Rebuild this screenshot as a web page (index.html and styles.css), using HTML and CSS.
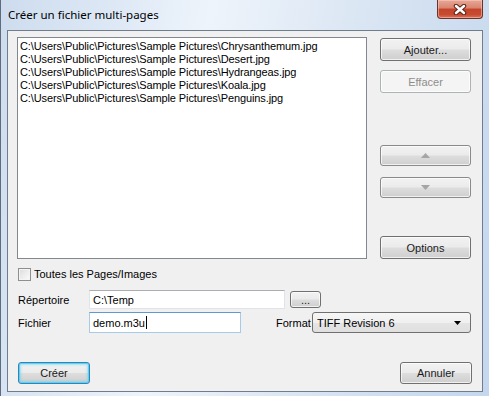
FILE: index.html
```html
<!DOCTYPE html>
<html lang="fr">
<head>
    <meta charset="UTF-8">
    <meta name="viewport" content="width=device-width, initial-scale=1.0">
    <title>Créer un fichier multi-pages</title>
    <link rel="stylesheet" href="styles.css">
</head>
<body>
    <div class="window">
        <div class="titlebar">
            <span class="title">Créer un fichier multi-pages</span>
            <div class="close">
                <svg width="14" height="11" viewBox="0 0 14 11">
                    <path d="M3 2 L11 9 M11 2 L3 9" stroke="#5b2216" stroke-width="4.5" stroke-linecap="round"/>
                    <path d="M3 2 L11 9 M11 2 L3 9" stroke="#fff" stroke-width="2.5" stroke-linecap="round"/>
                </svg>
            </div>
        </div>

        <div class="client">
            <div class="top">
                <ul class="filelist">
                    <li>C:\Users\Public\Pictures\Sample Pictures\Chrysanthemum.jpg</li>
                    <li>C:\Users\Public\Pictures\Sample Pictures\Desert.jpg</li>
                    <li>C:\Users\Public\Pictures\Sample Pictures\Hydrangeas.jpg</li>
                    <li>C:\Users\Public\Pictures\Sample Pictures\Koala.jpg</li>
                    <li>C:\Users\Public\Pictures\Sample Pictures\Penguins.jpg</li>
                </ul>
                <div class="side">
                    <button class="btn add">Ajouter...</button>
                    <button class="btn erase" disabled>Effacer</button>
                    <button class="btn move up">
                        <svg width="9" height="5" viewBox="0 0 9 5"><path d="M0 5 L4.5 0 L9 5 Z" fill="#a5a5a5"/></svg>
                    </button>
                    <button class="btn move down">
                        <svg width="9" height="5" viewBox="0 0 9 5"><path d="M0 0 L9 0 L4.5 5 Z" fill="#a5a5a5"/></svg>
                    </button>
                    <button class="btn options">Options</button>
                </div>
            </div>

            <label class="check"><span class="box"></span>Toutes les Pages/Images</label>

            <div class="row dir">
                <span class="label">Répertoire</span>
                <div class="field wide">C:\Temp</div>
                <button class="btn browse">...</button>
            </div>

            <div class="row file">
                <span class="label">Fichier</span>
                <div class="field narrow focus">demo.m3u<span class="caret"></span></div>
                <span class="format-label">Format</span>
                <div class="combo">
                    <span>TIFF Revision 6</span>
                    <svg width="7" height="4" viewBox="0 0 7 4"><path d="M0 0 L7 0 L3.5 4 Z" fill="#000"/></svg>
                </div>
            </div>

            <div class="actions">
                <button class="btn default">Créer</button>
                <button class="btn">Annuler</button>
            </div>
        </div>
    </div>
</body>
</html>
```

FILE: styles.css
```css
body {
    margin: 0;
    padding: 0;
    font-family: 'Liberation Sans', Arial, sans-serif;
    font-size: 11px;
    color: #000;
}

.window {
    width: 489px;
    height: 396px;
    box-sizing: border-box;
    padding: 0 6px 4px 6px;
    border-left: 1px solid #5f6c7b;
    background: linear-gradient(100deg, #cddcee 0%, #dde8f5 20%, #eef4fb 38%, #e2ebf6 55%, #d3e1f1 75%, #c4d7ee 100%);
    display: flex;
    flex-direction: column;
}

.titlebar {
    height: 30px;
    display: flex;
    justify-content: space-between;
    align-items: flex-start;
}

.title {
    font-family: 'Noto Sans', sans-serif;
    font-size: 11.5px;
    padding: 7px 0 0 1px;
    color: #000;
}

.close {
    width: 46px;
    height: 19px;
    box-sizing: border-box;
    border: 1px solid #6b3328;
    border-top: none;
    border-radius: 0 0 4px 4px;
    background: linear-gradient(#e6a898 0%, #d9846f 45%, #c5442b 50%, #c74a2f 80%, #d8735b 100%);
    box-shadow: inset 0 0 0 1px rgba(255, 210, 200, 0.5);
    display: flex;
    align-items: center;
    justify-content: center;
}

.client {
    flex: 1;
    border: 1px solid #6f7d8c;
    background-color: #f0f0f0;
    padding: 6px 11px 0 9px;
    display: flex;
    flex-direction: column;
}

.top {
    display: flex;
    height: 222px;
}

.filelist {
    flex: 1;
    margin: 0;
    padding: 2px 2px;
    list-style: none;
    background: #fff;
    border: 1px solid #828790;
    line-height: 13px;
    letter-spacing: -0.1px;
}

.side {
    width: 91px;
    margin-left: 13px;
    display: flex;
    flex-direction: column;
}

.btn {
    font-family: 'Liberation Sans', Arial, sans-serif;
    font-size: 11px;
    font-weight: 400;
    color: #1a1a1a;
    height: 23px;
    padding: 0;
    border: 1px solid #707070;
    border-radius: 3px;
    background: linear-gradient(#f2f2f2 0%, #ebebeb 48%, #dddddd 52%, #cfcfcf 100%);
    box-shadow: inset 0 0 0 1px rgba(255, 255, 255, 0.7);
}

.btn:disabled {
    color: #8d8d8d;
    border-color: #adb2b5;
    background: #f4f4f4;
}

.add {
    margin-top: 1px;
}

.erase {
    margin-top: 9px;
}

.move {
    height: 21px;
    display: flex;
    align-items: center;
    justify-content: center;
    border-color: #8a8a8a;
}

.up {
    margin-top: 52px;
}

.down {
    margin-top: 11px;
}

.options {
    margin-top: auto;
}

.check {
    display: flex;
    align-items: center;
    margin-top: 8px;
    margin-left: 1px;
    height: 14px;
}

.box {
    width: 13px;
    height: 13px;
    box-sizing: border-box;
    border: 1px solid #8e8f8f;
    background: linear-gradient(135deg, #dcdcdc, #fcfcfc);
    box-shadow: inset 0 0 0 1px #f4f4f4;
    margin-right: 3px;
}

.row {
    display: flex;
    align-items: center;
}

.dir {
    margin-top: 9px;
    height: 19px;
}

.file {
    margin-top: 3px;
    height: 21px;
}

.label {
    width: 72px;
    padding-left: 1px;
    box-sizing: border-box;
}

.field {
    height: 19px;
    box-sizing: border-box;
    background: #fff;
    border: 1px solid #e2e3ea;
    border-top-color: #abadb3;
    padding: 0 3px;
    display: flex;
    align-items: center;
}

.wide {
    width: 196px;
}

.narrow {
    width: 152px;
    height: 21px;
}

.focus {
    border-color: #a7cbe6;
    border-top-color: #5d9ad0;
}

.caret {
    width: 1px;
    height: 13px;
    background: #000;
    margin-left: 1px;
}

.browse {
    width: 31px;
    height: 17px;
    margin-left: 5px;
    line-height: 10px;
}

.format-label {
    margin-left: 35px;
}

.combo {
    margin-left: auto;
    width: 159px;
    height: 21px;
    box-sizing: border-box;
    border: 1px solid #707070;
    border-radius: 3px;
    background: linear-gradient(#f6f6f6 0%, #f0f0f0 50%, #e5e5e5 51%, #dfdfdf 100%);
    display: flex;
    align-items: center;
    justify-content: space-between;
    padding: 0 9px 0 4px;
}

.actions {
    display: flex;
    justify-content: space-between;
    margin: 29px -1px 0 1px;
}

.actions .btn {
    width: 72px;
    height: 22px;
}

.default {
    border-color: #3c7fb1;
    box-shadow: inset 0 0 0 1px #56d3f9, inset 0 0 2px 2px rgba(86, 211, 249, 0.5);
}
```
